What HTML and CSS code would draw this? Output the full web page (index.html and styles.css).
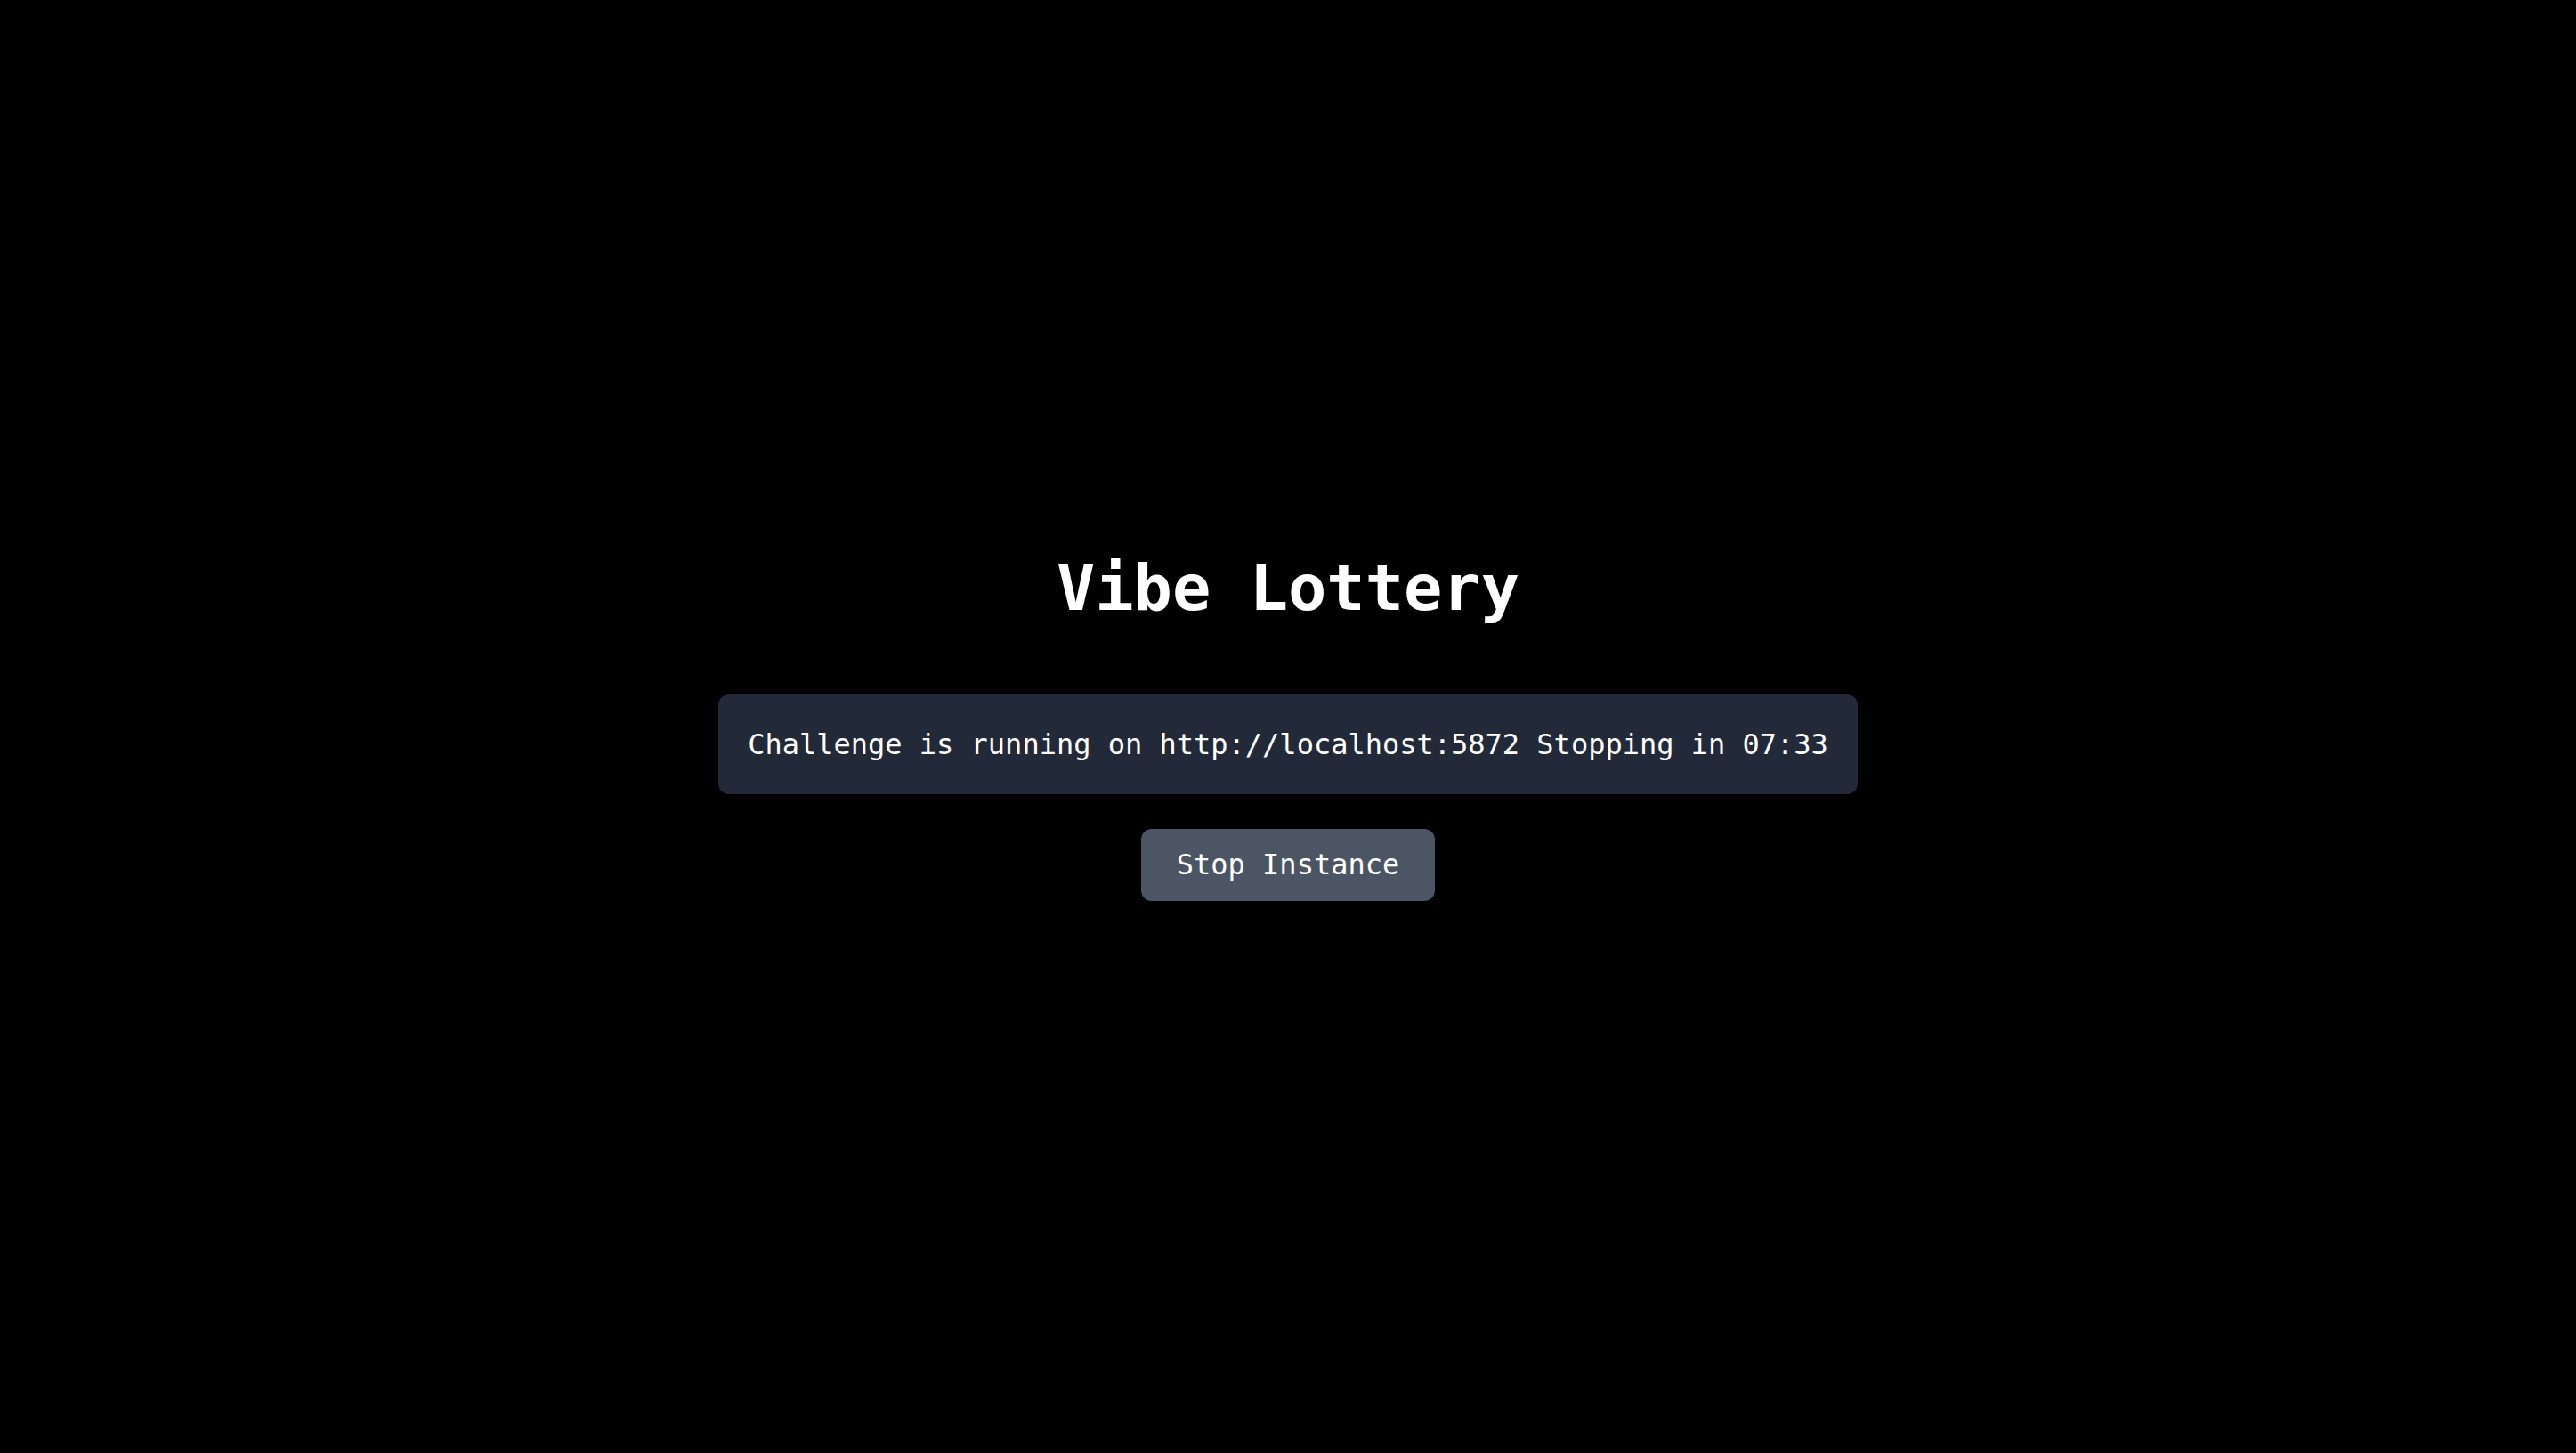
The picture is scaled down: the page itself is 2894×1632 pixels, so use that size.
FILE: index.html
```html
<!DOCTYPE html>
<html lang="en">
<head>
<meta charset="utf-8">
<title>Vibe Lottery</title>
<link rel="stylesheet" href="styles.css">
</head>
<body>
<main class="page">
  <h1 class="title">Vibe Lottery</h1>
  <div class="status">Challenge is running on http://localhost:5872 Stopping in 07:33</div>
  <button class="stop-btn" type="button">Stop Instance</button>
</main>
</body>
</html>
```

FILE: styles.css
```css
html, body {
  margin: 0;
  padding: 0;
  background: #000000;
  color: #ffffff;
  font-family: "DejaVu Sans Mono", "Liberation Mono", monospace;
}

.page {
  min-height: 100vh;
  display: flex;
  flex-direction: column;
  align-items: center;
  justify-content: center;
}

.title {
  margin: 0 0 80px 0;
  font-size: 72px;
  line-height: 80px;
  font-weight: 700;
}

.status {
  background: #222938;
  border-radius: 12px;
  padding: 32px 33px;
  font-size: 32px;
  line-height: 48px;
}

.stop-btn {
  margin-top: 39px;
  background: #4b5563;
  color: #ffffff;
  border: none;
  border-radius: 12px;
  padding: 16px 40px 17px;
  font-family: inherit;
  font-size: 32px;
  line-height: 48px;
}
```
